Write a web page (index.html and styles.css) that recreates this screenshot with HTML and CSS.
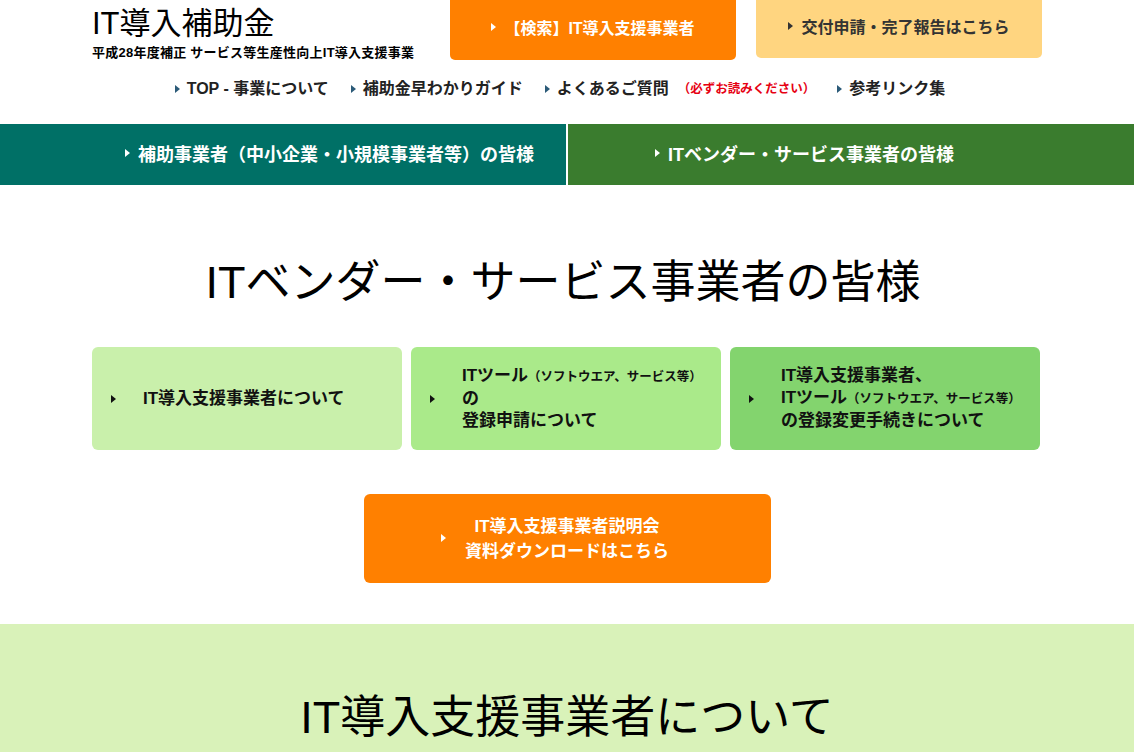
FILE: index.html
```html
<!DOCTYPE html>
<html lang="ja">
<head>
<meta charset="utf-8">
<title>ITベンダー・サービス事業者の皆様 | IT導入補助金</title>
<link rel="stylesheet" href="styles.css">
</head>
<body>
<header class="header wrap">
  <div class="brand">
    <div class="brand-title">IT導入補助金</div>
    <div class="brand-sub">平成28年度補正 サービス等生産性向上IT導入支援事業</div>
  </div>
  <div class="top-btns">
    <a class="top-btn top-btn-orange" href="#"><span class="tri tri-white"></span>【検索】IT導入支援事業者</a>
    <a class="top-btn top-btn-yellow" href="#"><span class="tri tri-dark"></span>交付申請・完了報告はこちら</a>
  </div>
</header>
<nav class="gnav">
  <a href="#"><span class="tri tri-nav"></span>TOP - 事業について</a>
  <a href="#"><span class="tri tri-nav"></span>補助金早わかりガイド</a>
  <a href="#"><span class="tri tri-nav"></span>よくあるご質問<span class="must">（必ずお読みください）</span></a>
  <a href="#"><span class="tri tri-nav"></span>参考リンク集</a>
</nav>
<div class="tabs">
  <div class="wrap tabs-inner">
    <a class="tab" href="#"><span class="tri tri-white"></span>補助事業者（中小企業・小規模事業者等）の皆様</a>
    <a class="tab" href="#"><span class="tri tri-white"></span>ITベンダー・サービス事業者の皆様</a>
  </div>
</div>
<main>
  <h1 class="page-title">ITベンダー・サービス事業者の皆様</h1>
  <div class="cards wrap">
    <a class="card card-1" href="#"><span class="tri tri-black"></span><span class="card-text">IT導入支援事業者について</span></a>
    <a class="card card-2" href="#"><span class="tri tri-black"></span><span class="card-text">ITツール<small>（ソフトウエア、サービス等）</small><br>の<br>登録申請について</span></a>
    <a class="card card-3" href="#"><span class="tri tri-black"></span><span class="card-text">IT導入支援事業者、<br>ITツール<small>（ソフトウエア、サービス等）</small><br>の登録変更手続きについて</span></a>
  </div>
  <div class="dl-row">
    <a class="dl-btn" href="#"><span class="tri tri-white"></span><span class="dl-text">IT導入支援事業者説明会<br>資料ダウンロードはこちら</span></a>
  </div>
  <section class="about">
    <h2 class="section-title">IT導入支援事業者について</h2>
  </section>
</main>
</body>
</html>
```
FILE: styles.css
```css
* { box-sizing: border-box; }
html, body { margin: 0; padding: 0; }
body {
  font-family: "Liberation Sans", "Noto Sans CJK JP", sans-serif;
  color: #111;
  background: #fff;
}
a { text-decoration: none; color: inherit; }
.wrap { width: 950px; margin: 0 auto; }

.tri {
  display: inline-block;
  width: 0; height: 0;
  border-left: 5px solid #000;
  border-top: 4px solid transparent;
  border-bottom: 4px solid transparent;
  flex: none;
}
.tri-white { border-left-color: #fff; }
.tri-dark { border-left-color: #333; }
.tri-nav { border-left-color: #2b5a78; }
.tri-black { border-left-color: #111; }

/* header */
.header { display: flex; justify-content: space-between; height: 60px; }
.brand { padding-top: 5px; }
.brand-title { font-size: 31px; line-height: 37px; color: #000; }
.brand-sub { font-size: 13px; line-height: 18px; font-weight: bold; margin-top: 2px; color: #000; letter-spacing: 0.25px; }
.top-btns { display: flex; gap: 20px; align-items: flex-start; }
.top-btn {
  width: 286px;
  display: flex; align-items: center; justify-content: center; gap: 8px;
  font-size: 16px; font-weight: bold;
  border-radius: 0 0 5px 5px;
  padding-bottom: 7px;
}
.top-btn-orange { background: #ff8000; color: #fff; height: 60px; }
.top-btn-yellow { background: #ffd580; color: #333; height: 58px; }

/* global nav */
.gnav {
  display: flex; justify-content: center; gap: 22px;
  margin: 17px 0 23px;
  font-size: 16px; line-height: 24px; font-weight: bold; color: #222;
  padding-right: 14px;
}
.gnav a { display: flex; align-items: center; gap: 7px; }
.must { color: #e60012; font-size: 12.5px; margin-left: 2px; }

/* tabs */
.tabs {
  background: linear-gradient(to right, #007066 calc(50% - 1px), #fff calc(50% - 1px), #fff calc(50% + 1px), #3a7c2e calc(50% + 1px));
}
.tabs-inner { display: grid; grid-template-columns: 1fr 1fr; height: 61px; }
.tab {
  display: flex; align-items: center; justify-content: center; gap: 8px;
  color: #fff; font-size: 18px; font-weight: bold;
  padding-bottom: 3px;
}

/* main */
.page-title {
  margin: 68px 0 34px;
  text-align: center;
  font-size: 45px; line-height: 60px; font-weight: normal; color: #000;
  padding-right: 8px;
}
.cards { display: grid; grid-template-columns: repeat(3, 310px); gap: 9px; }
.card {
  height: 103px; border-radius: 6px;
  display: flex; align-items: center;
  padding-left: 19px;
  font-size: 17px; line-height: 22px; font-weight: bold; color: #111;
}
.card .tri { margin-right: 27px; }
.card small { font-size: 12.5px; }
.card-1 { background: #c9f0ab; }
.card-2 { background: #aaea8a; }
.card-3 { background: #83d46e; }

.dl-row { display: flex; justify-content: center; margin: 44px 0 41px; }
.dl-btn {
  width: 407px; height: 89px; border-radius: 6px;
  background: #ff8000; color: #fff;
  display: flex; align-items: center; justify-content: center;
  font-size: 17px; line-height: 25px; font-weight: bold;
  position: relative;
}
.dl-btn .tri { position: absolute; left: 77px; top: 40px; }
.dl-text { text-align: center; }

.about { background: #d9f2b9; padding-top: 64px; min-height: 200px; }
.section-title {
  margin: 0; text-align: center;
  font-size: 45px; line-height: 60px; font-weight: normal; color: #000;
}
```
